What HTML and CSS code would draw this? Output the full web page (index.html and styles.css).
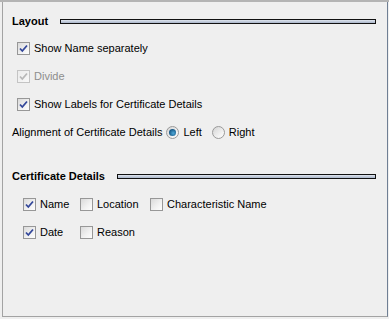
FILE: index.html
```html
<!DOCTYPE html>
<html lang="en">
<head>
    <meta charset="UTF-8">
    <meta name="viewport" content="width=device-width, initial-scale=1.0">
    <title>Certificate Layout</title>
    <link rel="stylesheet" href="styles.css">
</head>
<body>
    <div class="window">
        <div class="panel">
            <div class="section-title">
                <span>Layout</span>
                <div class="rule"></div>
            </div>

            <div class="rows">
                <label class="row option">
                    <span class="box checked"><svg viewBox="0 0 11 11"><path d="M2 5.5 L4.3 8 L9 2.5"/></svg></span>
                    Show Name separately
                </label>
                <label class="row option disabled">
                    <span class="box checked"><svg viewBox="0 0 11 11"><path d="M2 5.5 L4.3 8 L9 2.5"/></svg></span>
                    Divide
                </label>
                <label class="row option">
                    <span class="box checked"><svg viewBox="0 0 11 11"><path d="M2 5.5 L4.3 8 L9 2.5"/></svg></span>
                    Show Labels for Certificate Details
                </label>
                <div class="row align">
                    <span class="align-label">Alignment of Certificate Details</span>
                    <label class="option"><span class="radio selected"></span>Left</label>
                    <label class="option"><span class="radio"></span>Right</label>
                </div>
            </div>

            <div class="section-title second">
                <span>Certificate Details</span>
                <div class="rule"></div>
            </div>

            <div class="details">
                <label class="option">
                    <span class="box checked"><svg viewBox="0 0 11 11"><path d="M2 5.5 L4.3 8 L9 2.5"/></svg></span>
                    Name
                </label>
                <label class="option"><span class="box"></span>Location</label>
                <label class="option"><span class="box"></span>Characteristic Name</label>
                <label class="option">
                    <span class="box checked"><svg viewBox="0 0 11 11"><path d="M2 5.5 L4.3 8 L9 2.5"/></svg></span>
                    Date
                </label>
                <label class="option"><span class="box"></span>Reason</label>
            </div>
        </div>
    </div>
</body>
</html>
```

FILE: styles.css
```css
* {
    margin: 0;
    padding: 0;
    box-sizing: border-box;
}

body {
    background: #efefef;
    font-family: 'Liberation Sans', Arial, sans-serif;
    font-size: 11px;
    color: #000;
    width: 389px;
    height: 319px;
    overflow: hidden;
}

.window {
    border-top: 2px solid #b4b4b4;
    height: 319px;
}

.panel {
    margin-left: 2px;
    width: 386px;
    height: 315px;
    border-left: 1px solid #a3a3a3;
    border-right: 1px solid #6f7f94;
    border-bottom: 1px solid #a3a3a3;
    padding: 11px 0 0 9px;
}

.section-title {
    display: flex;
    align-items: center;
    height: 16px;
    font-weight: bold;
    padding-right: 11px;
}

.section-title.second {
    margin-top: 22px;
}

.rule {
    flex: 1;
    height: 5px;
    margin-left: 12px;
    border: 1px solid #111;
    background: linear-gradient(#dfe5ee, #aab6ca);
}

.rows {
    margin-top: 5px;
}

.row {
    height: 28px;
    display: flex;
    align-items: center;
}

.option {
    display: flex;
    align-items: center;
}

.rows .option {
    padding-left: 5px;
}

.rows .align .option {
    padding-left: 0;
}

.box {
    width: 13px;
    height: 13px;
    margin-right: 4px;
    border: 1px solid #979797;
    background: linear-gradient(135deg, #dadada, #f2f2f2 60%, #fdfdfd);
    display: flex;
}

.box svg {
    width: 11px;
    height: 11px;
}

.box path {
    fill: none;
    stroke: #33479a;
    stroke-width: 1.8;
}

.disabled {
    color: #8d8d8d;
}

.disabled .box {
    border-color: #c4c4c4;
    background: linear-gradient(135deg, #ececec, #f8f8f8);
}

.disabled .box path {
    stroke: #b8b8b8;
}

.align-label {
    margin-right: 4px;
}

.radio {
    width: 13px;
    height: 13px;
    margin-right: 4px;
    border: 1px solid #9a9a9a;
    border-radius: 50%;
    background: linear-gradient(135deg, #d4d4d4, #f6f6f6 75%);
    display: flex;
    align-items: center;
    justify-content: center;
}

.radio.selected::after {
    content: '';
    width: 7px;
    height: 7px;
    border-radius: 50%;
    background: radial-gradient(circle at 60% 60%, #4fa8d8, #0e4f7e 75%);
}

.align .option + .option {
    margin-left: 10px;
}

.details {
    margin-top: 6px;
    padding-left: 11px;
    display: grid;
    grid-template-columns: 57px 70px auto;
    grid-auto-rows: 28px;
    align-items: center;
}
```
